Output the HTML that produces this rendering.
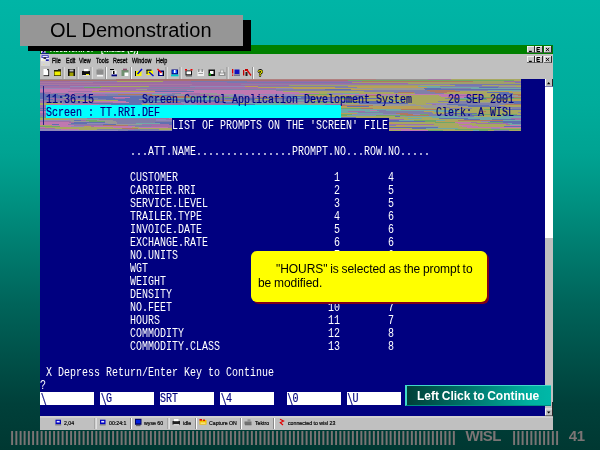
<!DOCTYPE html>
<html lang="en">
<head>
<meta charset="utf-8">
<title>OL Demonstration</title>
<style>
html,body{margin:0;padding:0;}
body{width:600px;height:450px;overflow:hidden;position:relative;
 font-family:"Liberation Sans",Arial,sans-serif;
 background:linear-gradient(to bottom,#00b5a6 0px,#00ac9b 104px,#00a392 154px,#009080 204px,#00645a 304px,#00403a 404px,#003832 450px);}
div,span{position:absolute;box-sizing:border-box;}
#root{left:0;top:0;width:600px;height:450px;will-change:transform;}
#win{left:40px;top:45px;width:513px;height:385px;background:#c0c0c0;}
#tbar{left:0;top:0;width:513px;height:9px;background:#008000;}
#menu{left:0;top:9px;width:513px;height:12px;background:#c0c0c0;}
#menuline{left:0;top:21.5px;width:513px;height:1px;background:#fff;}
#tool{left:0;top:22px;width:513px;height:12px;background:#c0c0c0;}
#term{left:0;top:34px;width:505px;height:337px;background:#000080;}
#sb{left:505px;top:34px;width:8px;height:337px;background:#fff;}
#sbthumb{left:0;top:159px;width:8px;height:178px;background:#c0c0c0;}
.mi{top:57.2px;font-size:8px;line-height:8px;color:#000;white-space:nowrap;transform-origin:0 0;transform:scaleX(0.68);-webkit-text-stroke:0.35px #000;}
#wtitle{left:50px;top:45.9px;letter-spacing:0.1px;font-size:7px;line-height:8px;font-weight:bold;color:#fff;white-space:nowrap;}
.tk{top:419.5px;font-size:6px;line-height:7px;color:#000;white-space:nowrap;transform-origin:0 0;transform:scaleX(0.87);-webkit-text-stroke:0.2px #000;}
#q{left:257.5px;top:67.5px;font-size:9px;line-height:10px;font-weight:bold;color:#e8e800;text-shadow:0.6px 0 0 #000,-0.6px 0 0 #000,0 0.6px 0 #000,0 -0.6px 0 #000;}
#task{left:0;top:371px;width:513px;height:14px;background:#c0c0c0;}
.t{font-family:"Liberation Mono","DejaVu Sans Mono",monospace;font-size:10px;line-height:10px;height:10px;color:#fff;white-space:pre;
 transform-origin:0 0;transform:scale(1,1.36);margin-top:0.6px;}
.t.b{color:#000080;-webkit-text-stroke:0.15px #000080;}
.fld{top:392px;width:54px;height:13px;background:#fff;}
.t.bs{transform:scale(1,1.6);margin-top:3.2px;margin-left:0.7px;}
#noise{position:absolute;left:40px;top:79px;}
#cyan{left:46px;top:105px;width:295px;height:13px;background:#00ffff;}
#lbg{left:172px;top:118px;width:217px;height:13px;background:#000080;}
#vline{left:43px;top:86px;width:1px;height:39px;background:#202080;}
#titlesh{left:28px;top:20px;width:223px;height:31px;background:#000;}
#title{left:20px;top:15px;width:223px;height:31px;background:#969696;color:#000;font-size:20px;line-height:31px;padding-left:30px;white-space:nowrap;}
#callsh{left:253px;top:253px;width:236px;height:51px;background:#800018;border-radius:6px;}
#call{left:251px;top:251px;width:235.5px;height:50.5px;background:#ffff00;border-radius:6px;color:#000;font-size:12px;line-height:14.5px;}
#call span{white-space:nowrap;word-spacing:-0.6px;letter-spacing:-0.05px;}
#btn{left:405px;top:385px;width:146px;height:20.5px;background:linear-gradient(to right,#004038 0%,#007068 40%,#00b0a0 85%,#00b8a8 100%);
 border-top:1px solid #40d8c8;border-left:2px solid #40d8c8;border-bottom:1px solid #008c80;color:#fff;font-weight:bold;font-size:12px;line-height:19px;white-space:nowrap;}
#btn span{left:10px;top:1px;word-spacing:-0.6px;}
.ft{top:428px;font-weight:bold;font-size:15px;line-height:17px;color:#7b7575;white-space:nowrap;}
</style>
</head>
<body>
<div id="root">
<div id="win">
  <div id="tbar"></div>
  <div id="menu"></div>
  <div id="menuline"></div>
  <div id="tool"></div>
  <div id="term"></div>
  <div id="sb"><div id="sbthumb"></div></div>
  <div id="task"></div>
</div>
<svg id="chrome" width="600" height="450" viewBox="0 0 600 450" style="position:absolute;left:0;top:0"><rect x="63.5" y="67" width="1" height="12" fill="#f4f4f4"/><rect x="62.5" y="67" width="1" height="12" fill="#909090"/><rect x="77.5" y="67" width="1" height="12" fill="#f4f4f4"/><rect x="76.5" y="67" width="1" height="12" fill="#909090"/><rect x="91.5" y="67" width="1" height="12" fill="#f4f4f4"/><rect x="90.5" y="67" width="1" height="12" fill="#909090"/><rect x="106.0" y="67" width="1" height="12" fill="#f4f4f4"/><rect x="105.0" y="67" width="1" height="12" fill="#909090"/><rect x="131.0" y="67" width="1" height="12" fill="#f4f4f4"/><rect x="130.0" y="67" width="1" height="12" fill="#909090"/><rect x="166.5" y="67" width="1" height="12" fill="#f4f4f4"/><rect x="165.5" y="67" width="1" height="12" fill="#909090"/><rect x="180.5" y="67" width="1" height="12" fill="#f4f4f4"/><rect x="179.5" y="67" width="1" height="12" fill="#909090"/><rect x="227.5" y="67" width="1" height="12" fill="#f4f4f4"/><rect x="226.5" y="67" width="1" height="12" fill="#909090"/><rect x="253.0" y="67" width="1" height="12" fill="#f4f4f4"/><rect x="252.0" y="67" width="1" height="12" fill="#909090"/><rect x="43.5" y="69" width="5.5" height="7" fill="#fff"/><rect x="48.3" y="70" width="0.8" height="6" fill="#000"/><rect x="43.5" y="75.3" width="5.5" height="0.8" fill="#000"/><rect x="47" y="69" width="2" height="1.2" fill="#404040"/><rect x="54" y="70" width="7" height="6" fill="#202000"/><rect x="54.5" y="71.5" width="6" height="3.8" fill="#f0f000"/><rect x="58" y="69" width="3" height="1.5" fill="#303030"/><rect x="68" y="69" width="7" height="7" fill="#101010"/><rect x="69.5" y="72.5" width="4" height="3.5" fill="#a0a000"/><rect x="69.5" y="69.5" width="4" height="2" fill="#c0c0c0"/><rect x="82" y="71" width="8" height="4" fill="#101010"/><rect x="84" y="69" width="4.5" height="2.2" fill="#fff"/><rect x="86" y="74" width="3" height="1.5" fill="#f0f000"/><rect x="83" y="75" width="6" height="1" fill="#e0e0e0"/><rect x="96.5" y="69.5" width="7" height="5" fill="#8c8c8c"/><rect x="98" y="68.7" width="4" height="1.5" fill="#a0a0a0"/><rect x="97" y="75" width="6" height="1.5" fill="#f4f4f4"/><rect x="110" y="69" width="4" height="1" fill="#000"/><rect x="112" y="70.5" width="4.5" height="4" fill="#f8f8f8"/><rect x="113" y="71" width="1.5" height="3" fill="#000"/><rect x="111.5" y="74.5" width="5.5" height="1.8" fill="#000080"/><rect x="121.5" y="70" width="7" height="6" fill="#709070"/><rect x="123" y="68.7" width="4" height="1.6" fill="#905070"/><rect x="124.5" y="72.5" width="4" height="3.5" fill="#fff"/><rect x="135" y="71" width="6.5" height="5" fill="#f4f400"/><rect x="135" y="71" width="1" height="5" fill="#000"/><path d="M137.5 74L142 69" stroke="#0000d0" stroke-width="1.4" fill="none"/><rect x="146.5" y="70.5" width="6.5" height="4.5" fill="#f4f400"/><rect x="146.5" y="69.5" width="5" height="1.2" fill="#000"/><rect x="146.5" y="70" width="1" height="4" fill="#000"/><path d="M149 72L153.5 76" stroke="#0000d0" stroke-width="1.3" fill="none"/><rect x="158" y="70.5" width="6" height="5.5" fill="#000080"/><rect x="159.5" y="72" width="3" height="3" fill="#fff"/><path d="M157.5 69L161.5 73" stroke="#f00000" stroke-width="1.3" fill="none"/><rect x="163" y="71" width="1" height="5" fill="#000"/><rect x="171.5" y="69.5" width="6.5" height="5" fill="#000080"/><rect x="172.5" y="70.3" width="4.5" height="3" fill="#2060ff"/><rect x="171" y="74.5" width="7.5" height="1.8" fill="#00c8c8"/><rect x="174" y="70" width="1.5" height="3" fill="#fff"/><rect x="185.5" y="70.5" width="6.5" height="5" fill="#101010"/><rect x="186.5" y="71.3" width="4.5" height="3" fill="#fff"/><rect x="185" y="69" width="2" height="1.5" fill="#f00000"/><rect x="190.5" y="69" width="2" height="1.5" fill="#f00000"/><rect x="186" y="75.5" width="6" height="1" fill="#606060"/><rect x="197.5" y="70.5" width="6.5" height="5.5" fill="#f0f0f0"/><rect x="198" y="69" width="1.5" height="3" fill="#909090"/><rect x="201.5" y="69" width="1.5" height="3" fill="#909090"/><rect x="198.5" y="73" width="4.5" height="1" fill="#a0a0a0"/><rect x="208.5" y="69.5" width="6.5" height="6.5" fill="#101010"/><rect x="210" y="71" width="3.5" height="3" fill="#fff"/><rect x="209" y="73.5" width="2" height="2" fill="#00a000"/><rect x="218.5" y="72" width="7" height="4" fill="#909090"/><rect x="220" y="69.5" width="4" height="3" fill="#a8a8a8"/><rect x="221" y="70.5" width="2" height="2" fill="#e8e8e8"/><rect x="220" y="73.5" width="4" height="1.5" fill="#f0f0f0"/><rect x="232" y="69" width="1.3" height="4.5" fill="#e00000"/><rect x="232" y="74.5" width="1.3" height="1.3" fill="#e00000"/><rect x="234.5" y="69.5" width="5" height="4.5" fill="#1010c0"/><rect x="234" y="74.5" width="6" height="1.3" fill="#606080"/><rect x="243" y="70" width="1.3" height="5.5" fill="#c00000"/><rect x="245" y="69" width="3" height="2" fill="#c00000"/><path d="M247 70L251 75.5" stroke="#e00000" stroke-width="1.3" fill="none"/><rect x="245.5" y="72" width="2" height="4" fill="#202020"/></svg><svg id="chrome2" width="600" height="450" viewBox="0 0 600 450" style="position:absolute;left:0;top:0"><rect x="527" y="46" width="8" height="6.7" fill="#c8c8c8"/><rect x="527" y="46" width="8" height="0.7" fill="#ffffff"/><rect x="527" y="46" width="0.7" height="6.7" fill="#ffffff"/><rect x="534.2" y="46" width="0.8" height="6.7" fill="#000"/><rect x="527" y="52.0" width="8" height="0.7" fill="#404040"/><rect x="529" y="50.8" width="2.8" height="1.2" fill="#000"/><rect x="535" y="46" width="8" height="6.7" fill="#c8c8c8"/><rect x="535" y="46" width="8" height="0.7" fill="#ffffff"/><rect x="535" y="46" width="0.7" height="6.7" fill="#ffffff"/><rect x="542.2" y="46" width="0.8" height="6.7" fill="#000"/><rect x="535" y="52.0" width="8" height="0.7" fill="#404040"/><path d="M540 47.5H537V51.5H540M537 49.5H539.6" stroke="#000" stroke-width="1" fill="none"/><rect x="544" y="46" width="8" height="6.7" fill="#c8c8c8"/><rect x="544" y="46" width="8" height="0.7" fill="#ffffff"/><rect x="544" y="46" width="0.7" height="6.7" fill="#ffffff"/><rect x="551.2" y="46" width="0.8" height="6.7" fill="#000"/><rect x="544" y="52.0" width="8" height="0.7" fill="#404040"/><path d="M546.0 48.0L549.2 51.0M549.2 48.0L546.0 51.0" stroke="#000" stroke-width="0.9" fill="none"/><rect x="527" y="56" width="8" height="6.7" fill="#c8c8c8"/><rect x="527" y="56" width="8" height="0.7" fill="#ffffff"/><rect x="527" y="56" width="0.7" height="6.7" fill="#ffffff"/><rect x="534.2" y="56" width="0.8" height="6.7" fill="#000"/><rect x="527" y="62.0" width="8" height="0.7" fill="#404040"/><rect x="529" y="60.8" width="2.8" height="1.2" fill="#000"/><rect x="535" y="56" width="8" height="6.7" fill="#c8c8c8"/><rect x="535" y="56" width="8" height="0.7" fill="#ffffff"/><rect x="535" y="56" width="0.7" height="6.7" fill="#ffffff"/><rect x="542.2" y="56" width="0.8" height="6.7" fill="#000"/><rect x="535" y="62.0" width="8" height="0.7" fill="#404040"/><path d="M540 57.5H537V61.5H540M537 59.5H539.6" stroke="#000" stroke-width="1" fill="none"/><rect x="544" y="56" width="8" height="6.7" fill="#c8c8c8"/><rect x="544" y="56" width="8" height="0.7" fill="#ffffff"/><rect x="544" y="56" width="0.7" height="6.7" fill="#ffffff"/><rect x="551.2" y="56" width="0.8" height="6.7" fill="#000"/><rect x="544" y="62.0" width="8" height="0.7" fill="#404040"/><path d="M546.0 58.0L549.2 61.0M549.2 58.0L546.0 61.0" stroke="#000" stroke-width="0.9" fill="none"/><rect x="545" y="79" width="8" height="7.5" fill="#c0c0c0"/><rect x="545" y="79" width="1" height="7.5" fill="#fff"/><rect x="552.2" y="79" width="0.8" height="7.5" fill="#000"/><rect x="545" y="86.3" width="8" height="0.7" fill="#5858a0"/><path d="M547 84.2L548.7 82L550.4 84.2Z" fill="#000"/><rect x="545" y="408.6" width="8" height="7.6" fill="#c0c0c0"/><rect x="545" y="408.6" width="7" height="0.7" fill="#fff"/><rect x="545" y="408.6" width="0.8" height="7.6" fill="#fff"/><rect x="552.2" y="402" width="0.8" height="14.2" fill="#000"/><rect x="545" y="415.4" width="8" height="0.8" fill="#404040"/><path d="M547 411.4L550.4 411.4L548.7 413.6Z" fill="#000"/><rect x="41" y="51" width="4.5" height="2.3" fill="#e8d8f0"/><rect x="42" y="51.6" width="2.5" height="1.2" fill="#2020c0"/><rect x="43" y="51" width="1.2" height="1" fill="#000"/><rect x="41" y="53.2" width="8" height="0.9" fill="#101090"/><rect x="41" y="54.7" width="8.2" height="6.8" fill="#f0f0ff"/><rect x="41.5" y="55.2" width="7.2" height="2.8" fill="#2020b0"/><rect x="42.4" y="55.9" width="5.4" height="1.4" fill="#e8e8ff"/><rect x="43.5" y="57.3" width="2.6" height="1.6" fill="#202020"/><rect x="41.5" y="59.6" width="3.5" height="1.2" fill="#f0f0c0"/><rect x="45.8" y="59.3" width="3" height="1.7" fill="#1818a0"/><rect x="41" y="62" width="9" height="4" fill="#d4d4d4"/><rect x="43.3" y="64" width="1" height="1" fill="#e8e080"/><rect x="94.5" y="418" width="1" height="11" fill="#888"/><rect x="95.5" y="418" width="1" height="11" fill="#fff"/><rect x="130" y="418" width="1" height="11" fill="#888"/><rect x="131" y="418" width="1" height="11" fill="#fff"/><rect x="167.5" y="418" width="1" height="11" fill="#888"/><rect x="168.5" y="418" width="1" height="11" fill="#fff"/><rect x="195" y="418" width="1" height="11" fill="#888"/><rect x="196" y="418" width="1" height="11" fill="#fff"/><rect x="240" y="418" width="1" height="11" fill="#888"/><rect x="241" y="418" width="1" height="11" fill="#fff"/><rect x="273" y="418" width="1" height="11" fill="#888"/><rect x="274" y="418" width="1" height="11" fill="#fff"/><rect x="40" y="416.6" width="513" height="0.8" fill="#e8e8e8"/><rect x="55.5" y="419.7" width="5.5" height="4.5" fill="#0000c0"/><rect x="56.7" y="420.9" width="3" height="1.6" fill="#e8e8ff"/><rect x="55.2" y="424.5" width="6" height="0.8" fill="#606060"/><rect x="100" y="419.7" width="5.5" height="4.5" fill="#0000c0"/><rect x="101.2" y="420.9" width="3" height="1.6" fill="#e8e8ff"/><rect x="99.7" y="424.5" width="6" height="0.8" fill="#606060"/><rect x="135" y="418.8" width="6.5" height="6" fill="#000060"/><rect x="136" y="419.8" width="4.5" height="3.6" fill="#0020e0"/><rect x="136" y="425.3" width="4.5" height="0.8" fill="#404040"/><rect x="172.5" y="421" width="7.5" height="3.6" fill="#202020"/><rect x="174" y="419" width="4.5" height="2.2" fill="#fff"/><rect x="173.5" y="424.2" width="5.5" height="1" fill="#f0f0f0"/><rect x="199.5" y="420" width="7" height="4.6" fill="#f0c000"/><rect x="199.5" y="419" width="2.5" height="1.6" fill="#e00000"/><rect x="203" y="419.5" width="2" height="1.5" fill="#e02000"/><rect x="200.5" y="422.6" width="5" height="1" fill="#fff8c0"/><rect x="244.5" y="421.5" width="7" height="3" fill="#707070"/><rect x="247.5" y="419.3" width="3" height="2.4" fill="#909090"/><rect x="245" y="424.4" width="6.5" height="0.8" fill="#505050"/><path d="M280 419.2L283.5 421L280.3 422.6L283 425" stroke="#e00000" stroke-width="1.2" fill="none"/></svg>
<span id="wtitle">AccuTerm 97 - [wisl23 (1)]</span>
<span class="mi" style="left:52px">File</span><span class="mi" style="left:65.5px">Edit</span><span class="mi" style="left:79px">View</span><span class="mi" style="left:95.5px">Tools</span><span class="mi" style="left:113px">Reset</span><span class="mi" style="left:132px">Window</span><span class="mi" style="left:156px">Help</span>
<span id="q">?</span>
<span class="tk" style="left:64px">2,04</span><span class="tk" style="left:109px">00:24:1</span><span class="tk" style="left:144px">wyse 60</span><span class="tk" style="left:183px">idle</span><span class="tk" style="left:209px">Capture ON</span><span class="tk" style="left:255px">Tektro</span><span class="tk" style="left:288px">connected to wisl 23</span>
<svg id="noise" width="481" height="52" viewBox="0 0 481 52" shape-rendering="crispEdges" fill="none" stroke-width="1">
<path stroke="#989090" d="M0 0.5h76M336 0.5h52"/>
<path stroke="#a87070" d="M76 0.5h99M0 1.5h21M21 1.5h25M46 1.5h76M122 1.5h186"/>
<path stroke="#b08080" d="M175 0.5h161"/>
<path stroke="#a878a0" d="M388 0.5h23M0 3.5h53M0 5.5h152"/>
<path stroke="#a8a860" d="M411 0.5h70M474 1.5h7M77 2.5h46M380 6.5h35M442 6.5h16M60 7.5h41M101 7.5h8M476 7.5h5M243 12.5h81M420 12.5h33M259 13.5h55M314 13.5h9M323 13.5h31M433 13.5h14M279 14.5h8M319 14.5h35M354 14.5h21M404 14.5h8M412 14.5h33M445 14.5h14M473 14.5h8M443 15.5h17M296 16.5h8M304 16.5h11M360 16.5h28M388 16.5h11M444 16.5h14M311 17.5h80M391 17.5h10M430 17.5h14M444 17.5h11M322 18.5h27M349 18.5h12M361 18.5h12M373 18.5h6M379 18.5h7M386 18.5h22M342 19.5h36M378 19.5h14M392 19.5h13M215 20.5h15M267 20.5h18M315 20.5h45M360 20.5h18M378 20.5h7M385 20.5h4M389 20.5h31M31 21.5h47M272 21.5h11M309 21.5h39M364 21.5h9M373 21.5h18M391 21.5h64M341 22.5h32M373 22.5h25M433 22.5h11M444 22.5h9M351 23.5h36M387 23.5h27M0 24.5h22M199 24.5h10M307 24.5h12M368 24.5h18M0 25.5h10M102 25.5h7M376 25.5h9M385 25.5h7M6 26.5h6M103 26.5h12M136 26.5h31M465 26.5h16M214 27.5h48M262 27.5h8M329 27.5h6M465 27.5h8M473 27.5h8M221 28.5h18M239 28.5h32M378 28.5h6M426 28.5h3M429 28.5h31M259 29.5h6M386 29.5h23M432 29.5h23M95 30.5h50M154 30.5h6M396 30.5h48M101 31.5h56M416 31.5h19M435 31.5h28M463 31.5h18M421 32.5h13M434 32.5h5M446 32.5h5M451 32.5h3M454 32.5h27M278 33.5h20M392 33.5h72M464 33.5h14M393 34.5h13M437 34.5h17M454 34.5h17M471 34.5h9M96 35.5h91M237 35.5h11M477 35.5h4M442 36.5h25M210 37.5h25M275 37.5h80M434 37.5h4M438 37.5h14M452 37.5h9M227 38.5h11M316 38.5h10M336 38.5h33M369 38.5h23M0 39.5h19M233 39.5h7M349 39.5h10M359 39.5h9M382 39.5h17M0 40.5h28M238 40.5h33M293 40.5h6M364 40.5h46M410 40.5h14M256 41.5h8M267 41.5h19M293 41.5h18M405 41.5h4M409 41.5h9M147 42.5h8M231 42.5h10M241 42.5h47M300 42.5h8M417 42.5h10M427 42.5h14M253 43.5h18M352 43.5h43M437 43.5h11M355 44.5h10M365 44.5h26M391 44.5h9M400 44.5h18M430 44.5h6M283 45.5h7M290 45.5h60M394 45.5h72M0 46.5h12M286 46.5h43M380 46.5h14M394 46.5h18M412 46.5h7M432 46.5h8M440 46.5h7M447 46.5h23M255 47.5h76M399 47.5h15M414 47.5h8M438 47.5h26M5 48.5h68M92 48.5h7M254 48.5h23M277 48.5h3M300 48.5h14M314 48.5h19M398 48.5h15M413 48.5h14M15 49.5h21M36 49.5h21M57 49.5h25M98 49.5h67M306 49.5h66M418 49.5h33M460 49.5h21M39 50.5h10M49 50.5h8M119 50.5h35M293 50.5h19M312 50.5h12M370 50.5h45M306 51.5h55M403 51.5h9M412 51.5h21M448 51.5h6M469 51.5h12"/>
<path stroke="#70a868" d="M308 1.5h117M425 1.5h49M44 8.5h17M267 15.5h26M149 17.5h22M167 18.5h30M442 18.5h14M300 19.5h10M455 19.5h26M420 20.5h27M232 23.5h19M266 23.5h51M8 27.5h23M286 29.5h35M6 30.5h26M444 30.5h22M77 31.5h9M233 31.5h21M237 32.5h14M242 33.5h6M243 34.5h16M187 35.5h50M248 35.5h64M380 35.5h8M414 35.5h10M432 35.5h45M197 36.5h15M256 36.5h8M264 36.5h22M286 36.5h21M336 36.5h30M0 38.5h11M165 40.5h24M46 41.5h11M172 41.5h13M286 41.5h7M374 41.5h22M49 42.5h16M385 42.5h5M390 42.5h6M395 43.5h20M448 43.5h15M0 47.5h20M415 50.5h66M154 51.5h6M215 51.5h13M388 51.5h15M439 51.5h9"/>
<path stroke="#9c6ca4" d="M0 2.5h30M123 2.5h28M207 2.5h81M288 2.5h34M464 2.5h17M53 3.5h84M137 3.5h50M0 4.5h329M329 4.5h39M152 5.5h23M175 5.5h26M19 6.5h97M116 6.5h133"/>
<path stroke="#9080a8" d="M30 2.5h47M201 5.5h209"/>
<path stroke="#7878b0" d="M151 2.5h56M187 3.5h125M475 3.5h6M410 5.5h71M415 6.5h27"/>
<path stroke="#b07860" d="M322 2.5h111M387 11.5h28M390 12.5h30M358 13.5h16M395 13.5h12M78 15.5h34M473 15.5h8M110 16.5h12M328 16.5h13M478 16.5h3M116 17.5h33M130 18.5h10M140 18.5h14M218 18.5h26M408 18.5h11M474 18.5h7M446 19.5h9M177 21.5h16M124 22.5h16M465 25.5h16M265 26.5h68M277 27.5h11M49 28.5h31M281 28.5h12M321 29.5h12M361 30.5h35M439 32.5h7M177 34.5h3M356 34.5h12M360 35.5h13M163 36.5h15M366 36.5h23M175 37.5h31M200 38.5h9M209 38.5h18M214 39.5h19M311 41.5h7M418 41.5h45M256 45.5h13M63 46.5h25M270 46.5h16M82 49.5h16M249 50.5h19M197 51.5h18M264 51.5h42"/>
<path stroke="#a0a068" d="M433 2.5h31M312 3.5h163M368 4.5h17M385 4.5h76M461 4.5h20M249 6.5h101M350 6.5h30M458 6.5h23"/>
<path stroke="#8870b0" d="M0 6.5h19"/>
<path stroke="#a070a8" d="M0 7.5h30M109 7.5h41M0 8.5h44M61 8.5h39M155 8.5h63M30 9.5h125M155 9.5h37M192 9.5h44M70 10.5h26M59 11.5h88M28 12.5h24M0 13.5h11M5 14.5h8M147 14.5h13M18 15.5h47M148 15.5h21M30 16.5h5M35 16.5h7M42 16.5h21M63 16.5h4M156 16.5h24M413 16.5h13M171 17.5h18M197 18.5h21M7 19.5h10M75 19.5h10M436 19.5h5M13 20.5h29M0 22.5h9M0 23.5h10M38 23.5h35M151 23.5h24M101 24.5h5M117 24.5h25M152 24.5h32M244 24.5h14M109 25.5h19M128 25.5h16M157 25.5h5M162 25.5h7M169 25.5h7M176 25.5h22M285 25.5h20M392 25.5h4M0 26.5h6M125 26.5h11M191 26.5h74M0 27.5h8M83 27.5h3M193 27.5h21M0 28.5h16M80 28.5h15M95 28.5h44M61 29.5h38M99 29.5h32M131 29.5h16M242 29.5h17M0 30.5h6M69 30.5h18M87 30.5h8M145 30.5h9M257 30.5h8M67 31.5h10M86 31.5h15M157 31.5h28M221 31.5h12M26 32.5h29M55 32.5h37M92 32.5h12M223 32.5h14M308 32.5h17M248 33.5h5M0 34.5h21M276 34.5h10M0 35.5h18M40 35.5h17M212 36.5h35M93 37.5h10M245 37.5h18M95 38.5h36M47 39.5h35M110 39.5h19M246 39.5h8M340 39.5h9M471 39.5h10M126 40.5h22M340 40.5h24M475 40.5h6M41 41.5h5M185 41.5h17M0 42.5h15M15 42.5h16M288 42.5h12M29 43.5h5M271 43.5h19M431 43.5h6M278 44.5h22M436 44.5h32M102 45.5h27M350 45.5h44M466 45.5h4M34 46.5h29M112 46.5h8M120 46.5h21M51 47.5h3M111 47.5h17M128 47.5h24M185 47.5h31M128 48.5h17M145 48.5h13M158 48.5h6M176 48.5h78M0 49.5h15M180 49.5h4M184 49.5h37M221 49.5h30M88 50.5h6M187 50.5h7M194 50.5h18M232 50.5h9M191 51.5h6"/>
<path stroke="#9088b8" d="M30 7.5h30M150 7.5h55M0 9.5h30M236 9.5h17M44 14.5h88M287 14.5h16M193 15.5h11M220 15.5h47M293 15.5h10M134 16.5h22M180 16.5h22M202 16.5h7M227 16.5h28M189 17.5h54M0 20.5h4M283 21.5h26M183 22.5h28M10 23.5h13M141 23.5h10M200 23.5h32M22 24.5h11M142 24.5h10M386 24.5h28M59 25.5h12M144 25.5h13M396 25.5h11M66 26.5h37M115 26.5h10M86 27.5h86M209 28.5h12M12 32.5h9M66 34.5h13M79 35.5h6M312 35.5h48M373 35.5h7M247 36.5h9M168 39.5h8M200 39.5h14M240 39.5h6M116 40.5h10M0 41.5h30M116 41.5h41M137 42.5h10M155 42.5h36M441 42.5h9M174 43.5h32M47 44.5h21M191 44.5h5M229 44.5h49M195 45.5h17M234 45.5h7M211 46.5h28M31 47.5h13M216 47.5h39M451 49.5h9M0 50.5h21M0 51.5h78"/>
<path stroke="#b8a058" d="M205 7.5h13M308 7.5h70M218 8.5h77M317 8.5h70M253 9.5h24M277 9.5h37M311 10.5h22M52 12.5h63M453 12.5h19M407 13.5h26M469 13.5h12M255 16.5h41M432 16.5h7M272 17.5h39M297 20.5h18M447 20.5h34M455 21.5h11M466 21.5h15M293 22.5h8M459 26.5h6M288 27.5h19M335 27.5h46M298 28.5h42M340 28.5h38M410 28.5h16M333 29.5h24M357 29.5h29M384 32.5h10M153 33.5h6M286 34.5h31M136 38.5h20M326 38.5h10M279 39.5h15M215 41.5h19M223 42.5h8M396 42.5h21M227 43.5h6M233 43.5h20M290 43.5h62M300 44.5h22M322 44.5h14M336 44.5h19M241 45.5h7M356 46.5h9M44 47.5h7M346 47.5h27M373 47.5h7"/>
<path stroke="#8080a8" d="M218 7.5h90M400 7.5h59M100 8.5h55M295 8.5h22M458 8.5h23M401 9.5h30M107 10.5h178M236 11.5h151M415 11.5h33M324 12.5h66M354 13.5h4M374 13.5h21M13 14.5h16M34 14.5h10M132 14.5h9M375 14.5h13M388 14.5h16M65 15.5h13M127 15.5h8M67 16.5h4M71 16.5h39M315 16.5h13M439 16.5h5M112 18.5h18M17 19.5h41M172 19.5h13M282 19.5h18M405 19.5h12M42 20.5h24M176 20.5h31M230 20.5h37M285 20.5h12M0 21.5h31M193 21.5h52M264 21.5h8M9 22.5h34M211 22.5h29M240 22.5h25M265 22.5h15M398 22.5h35M23 23.5h15M414 23.5h23M33 24.5h18M414 24.5h60M427 25.5h38M449 26.5h10M172 27.5h7M456 27.5h9M403 28.5h7M460 28.5h21M24 29.5h19M178 29.5h12M409 29.5h23M472 29.5h9M182 30.5h15M254 31.5h24M337 31.5h9M251 32.5h20M271 32.5h6M277 32.5h15M339 32.5h45M318 33.5h74M478 33.5h3M94 34.5h54M343 34.5h13M368 34.5h25M480 34.5h1M73 35.5h6M388 35.5h26M0 36.5h12M73 36.5h32M105 36.5h34M389 36.5h17M406 36.5h18M0 37.5h63M124 37.5h51M418 37.5h16M11 38.5h45M56 38.5h6M62 38.5h33M131 38.5h5M156 38.5h39M82 39.5h28M254 39.5h4M258 39.5h21M59 40.5h30M89 40.5h20M109 40.5h7M73 41.5h30M103 41.5h13M76 42.5h8M84 42.5h53M308 42.5h34M77 43.5h38M77 44.5h19M28 45.5h35M88 46.5h24M239 46.5h23M329 46.5h27M95 47.5h16M331 47.5h15M57 50.5h31M94 50.5h25M78 51.5h10M100 51.5h44M454 51.5h15"/>
<path stroke="#70a8a8" d="M378 7.5h22M387 8.5h8M395 8.5h44M431 9.5h50M448 11.5h33M303 14.5h16M112 15.5h15M251 18.5h10M116 19.5h56M417 19.5h19M145 20.5h31M257 21.5h7M348 21.5h16M108 22.5h16M209 24.5h23M232 24.5h12M215 25.5h14M229 25.5h38M167 26.5h24M179 27.5h7M270 27.5h7M271 28.5h10M293 28.5h5M43 29.5h18M32 30.5h37M160 30.5h22M265 30.5h96M35 31.5h32M185 31.5h25M278 31.5h12M290 31.5h40M346 31.5h70M292 32.5h16M325 32.5h14M394 32.5h18M412 32.5h9M253 33.5h25M298 33.5h20M259 34.5h17M317 34.5h26M24 35.5h16M12 36.5h28M40 36.5h23M185 36.5h12M307 36.5h29M365 37.5h53M461 37.5h20M392 38.5h13M405 38.5h76M176 39.5h24M368 39.5h14M428 39.5h15M443 39.5h6M449 39.5h22M48 40.5h11M189 40.5h36M271 40.5h22M440 40.5h12M202 41.5h13M359 41.5h15M396 41.5h9M463 41.5h18M96 44.5h24M468 44.5h4M470 45.5h11M280 48.5h20M165 49.5h15M386 49.5h32M178 50.5h9M433 51.5h6"/>
<path stroke="#989898" d="M459 7.5h17M314 9.5h70M96 10.5h11M333 10.5h24M357 10.5h28M472 12.5h9M160 14.5h17M135 15.5h13M169 15.5h24M341 16.5h19M458 16.5h20M455 17.5h26M23 18.5h9M99 20.5h6M251 23.5h15M437 23.5h37M106 24.5h11M258 24.5h49M267 25.5h18M305 25.5h71M40 26.5h26M333 26.5h35M368 26.5h50M47 27.5h10M57 27.5h26M381 27.5h47M139 28.5h70M384 28.5h19M166 29.5h12M455 29.5h17M178 36.5h7M206 37.5h4M360 37.5h5M19 39.5h28M28 40.5h8M36 40.5h12M30 41.5h4M57 41.5h16M31 42.5h18M65 42.5h11M204 42.5h19M65 43.5h12M206 43.5h21M68 44.5h9M218 44.5h11M76 45.5h26M248 45.5h8M269 45.5h14M262 46.5h8M365 46.5h15M380 47.5h19M241 50.5h8"/>
<path stroke="#6070b0" d="M439 8.5h19M384 9.5h17M285 10.5h26M385 10.5h96M115 12.5h39M447 13.5h22M0 14.5h5M459 14.5h14M0 15.5h18M460 15.5h13M0 16.5h30M122 16.5h12M0 17.5h116M243 17.5h29M0 18.5h23M32 18.5h41M90 18.5h22M154 18.5h13M244 18.5h7M261 18.5h19M280 18.5h11M291 18.5h31M424 18.5h18M456 18.5h18M0 19.5h7M58 19.5h5M63 19.5h12M85 19.5h31M185 19.5h7M192 19.5h79M271 19.5h11M310 19.5h32M441 19.5h5M4 20.5h9M66 20.5h33M105 20.5h31M136 20.5h9M207 20.5h8M78 21.5h23M101 21.5h12M113 21.5h22M135 21.5h42M245 21.5h12M86 22.5h22M140 22.5h19M159 22.5h24M280 22.5h13M301 22.5h40M453 22.5h28M89 23.5h18M107 23.5h34M175 23.5h25M317 23.5h11M328 23.5h23M474 23.5h7M51 24.5h50M184 24.5h15M319 24.5h17M336 24.5h7M343 24.5h25M474 24.5h7M71 25.5h6M77 25.5h10M87 25.5h7M94 25.5h8M198 25.5h17M407 25.5h20M418 26.5h31M186 27.5h7M307 27.5h22M428 27.5h28M16 28.5h33M0 29.5h12M12 29.5h7M19 29.5h5M147 29.5h19M219 29.5h17M236 29.5h6M265 29.5h21M224 30.5h21M245 30.5h12M466 30.5h15M0 31.5h35M21 32.5h5M104 32.5h106M44 33.5h8M52 33.5h24M76 33.5h9M85 33.5h41M126 33.5h27M159 33.5h30M189 33.5h53M41 34.5h25M79 34.5h15M148 34.5h29M180 34.5h9M189 34.5h16M205 34.5h19M224 34.5h19M406 34.5h31M18 35.5h6M57 35.5h16M85 35.5h11M424 35.5h8M63 36.5h10M139 36.5h24M424 36.5h18M467 36.5h14M63 37.5h30M235 37.5h10M263 37.5h12M355 37.5h5M195 38.5h5M238 38.5h46M284 38.5h32M294 39.5h16M310 39.5h30M399 39.5h29M225 40.5h13M299 40.5h23M322 40.5h10M332 40.5h8M424 40.5h16M452 40.5h9M461 40.5h14M34 41.5h7M234 41.5h22M264 41.5h3M318 41.5h21M339 41.5h20M191 42.5h13M342 42.5h43M450 42.5h5M455 42.5h26M34 43.5h31M115 43.5h59M463 43.5h5M468 43.5h13M31 44.5h16M120 44.5h17M137 44.5h54M196 44.5h22M472 44.5h9M12 45.5h7M63 45.5h13M129 45.5h19M148 45.5h17M165 45.5h30M212 45.5h22M141 46.5h16M157 46.5h54M152 47.5h33M464 47.5h17M164 48.5h12M333 48.5h65M372 49.5h14M88 51.5h12"/>
<path stroke="#c078b0" d="M0 10.5h70M0 11.5h33M33 11.5h26M147 11.5h19M166 11.5h70M0 12.5h28M154 12.5h30M184 12.5h59M11 13.5h248M29 14.5h5M141 14.5h6M177 14.5h102M204 15.5h16M303 15.5h140M209 16.5h9M218 16.5h9M399 16.5h14M426 16.5h6M401 17.5h29M73 18.5h17M419 18.5h5M43 22.5h43M73 23.5h16M10 25.5h49M12 26.5h13M25 26.5h15M31 27.5h16M190 29.5h29M197 30.5h16M213 30.5h3M216 30.5h8M210 31.5h11M330 31.5h7M0 32.5h12M210 32.5h13M0 33.5h44M21 34.5h20M103 37.5h21M129 39.5h23M152 39.5h16M148 40.5h17M157 41.5h4M161 41.5h11M0 43.5h29M415 43.5h16M0 44.5h22M22 44.5h9M418 44.5h12M0 45.5h12M19 45.5h9M12 46.5h22M419 46.5h13M470 46.5h11M20 47.5h11M54 47.5h9M63 47.5h17M80 47.5h15M422 47.5h16M0 48.5h5M73 48.5h19M99 48.5h29M427 48.5h5M432 48.5h49M251 49.5h55M21 50.5h18M154 50.5h24M212 50.5h20M268 50.5h12M280 50.5h13M324 50.5h46M144 51.5h10M160 51.5h31M228 51.5h7M235 51.5h29M361 51.5h27"/>
</svg>
<div id="vline"></div>
<div id="cyan"></div>
<div id="lbg"></div>
<div class="fld" style="left:40px"></div><div class="fld" style="left:100px"></div><div class="fld" style="left:160px"></div><div class="fld" style="left:220px"></div><div class="fld" style="left:286.5px"></div><div class="fld" style="left:346.5px"></div>
<span class="t b" style="left:46px;top:92px">11:36:15</span>
<span class="t b" style="left:142px;top:92px">Screen Control Application Development System</span>
<span class="t b" style="left:448px;top:92px">20 SEP 2001</span>
<span class="t b" style="left:46px;top:105px">Screen : TT.RRI.DEF</span>
<span class="t b" style="left:436px;top:105px">Clerk: A WISL</span>
<span class="t " style="left:172px;top:118px">LIST OF PROMPTS ON THE 'SCREEN' FILE</span>
<span class="t " style="left:130px;top:144px">...ATT.NAME................PROMPT.NO...ROW.NO.....</span>
<span class="t " style="left:130px;top:170px">CUSTOMER</span>
<span class="t " style="left:334px;top:170px">1</span>
<span class="t " style="left:388px;top:170px">4</span>
<span class="t " style="left:130px;top:183px">CARRIER.RRI</span>
<span class="t " style="left:334px;top:183px">2</span>
<span class="t " style="left:388px;top:183px">5</span>
<span class="t " style="left:130px;top:196px">SERVICE.LEVEL</span>
<span class="t " style="left:334px;top:196px">3</span>
<span class="t " style="left:388px;top:196px">5</span>
<span class="t " style="left:130px;top:209px">TRAILER.TYPE</span>
<span class="t " style="left:334px;top:209px">4</span>
<span class="t " style="left:388px;top:209px">6</span>
<span class="t " style="left:130px;top:222px">INVOICE.DATE</span>
<span class="t " style="left:334px;top:222px">5</span>
<span class="t " style="left:388px;top:222px">6</span>
<span class="t " style="left:130px;top:235px">EXCHANGE.RATE</span>
<span class="t " style="left:334px;top:235px">6</span>
<span class="t " style="left:388px;top:235px">6</span>
<span class="t " style="left:130px;top:248px">NO.UNITS</span>
<span class="t " style="left:334px;top:248px">7</span>
<span class="t " style="left:388px;top:248px">6</span>
<span class="t " style="left:130px;top:261px">WGT</span>
<span class="t " style="left:334px;top:261px">8</span>
<span class="t " style="left:388px;top:261px">7</span>
<span class="t " style="left:130px;top:274px">WEIGHT</span>
<span class="t " style="left:334px;top:274px">9</span>
<span class="t " style="left:388px;top:274px">7</span>
<span class="t " style="left:130px;top:287px">DENSITY</span>
<span class="t " style="left:334px;top:287px">9</span>
<span class="t " style="left:388px;top:287px">7</span>
<span class="t " style="left:130px;top:300px">NO.FEET</span>
<span class="t " style="left:328px;top:300px">10</span>
<span class="t " style="left:388px;top:300px">7</span>
<span class="t " style="left:130px;top:313px">HOURS</span>
<span class="t " style="left:328px;top:313px">11</span>
<span class="t " style="left:388px;top:313px">7</span>
<span class="t " style="left:130px;top:326px">COMMODITY</span>
<span class="t " style="left:328px;top:326px">12</span>
<span class="t " style="left:388px;top:326px">8</span>
<span class="t " style="left:130px;top:339px">COMMODITY.CLASS</span>
<span class="t " style="left:328px;top:339px">13</span>
<span class="t " style="left:388px;top:339px">8</span>
<span class="t " style="left:46px;top:365px">X Depress Return/Enter Key to Continue</span>
<span class="t " style="left:40px;top:378px">?</span>
<span class="t b bs" style="left:40px;top:391px">\</span>
<span class="t b bs" style="left:100px;top:391px">\</span>
<span class="t b" style="left:106px;top:391px">G</span>
<span class="t b" style="left:160px;top:391px">SRT</span>
<span class="t b bs" style="left:220px;top:391px">\</span>
<span class="t b" style="left:226px;top:391px">4</span>
<span class="t b bs" style="left:286.5px;top:391px">\</span>
<span class="t b" style="left:292.5px;top:391px">0</span>
<span class="t b bs" style="left:346.5px;top:391px">\</span>
<span class="t b" style="left:352.5px;top:391px">U</span>
<div id="titlesh"></div>
<div id="title">OL Demonstration</div>
<div id="callsh"></div>
<div id="call"><span style="left:25px;top:11px">"HOURS" is selected as the prompt to</span><span style="left:7px;top:25px">be modified.</span></div>
<div id="btn"><span>Left Click to Continue</span></div>
<div class="ft" style="left:10px;letter-spacing:0.01px">||||||||||||||||||||||||||||||||||||||||||||||||||||||||||||||||||||||||||||||||||||||||||||||||||||||||||</div>
<div class="ft" style="left:465.5px;top:427.3px;letter-spacing:-0.5px">WISL</div>
<div class="ft" style="left:512px;letter-spacing:0.1px">|||||||||||</div>
<div class="ft" style="left:568.7px;top:427.3px;letter-spacing:-0.4px">41</div>
</div>
</body>
</html>
